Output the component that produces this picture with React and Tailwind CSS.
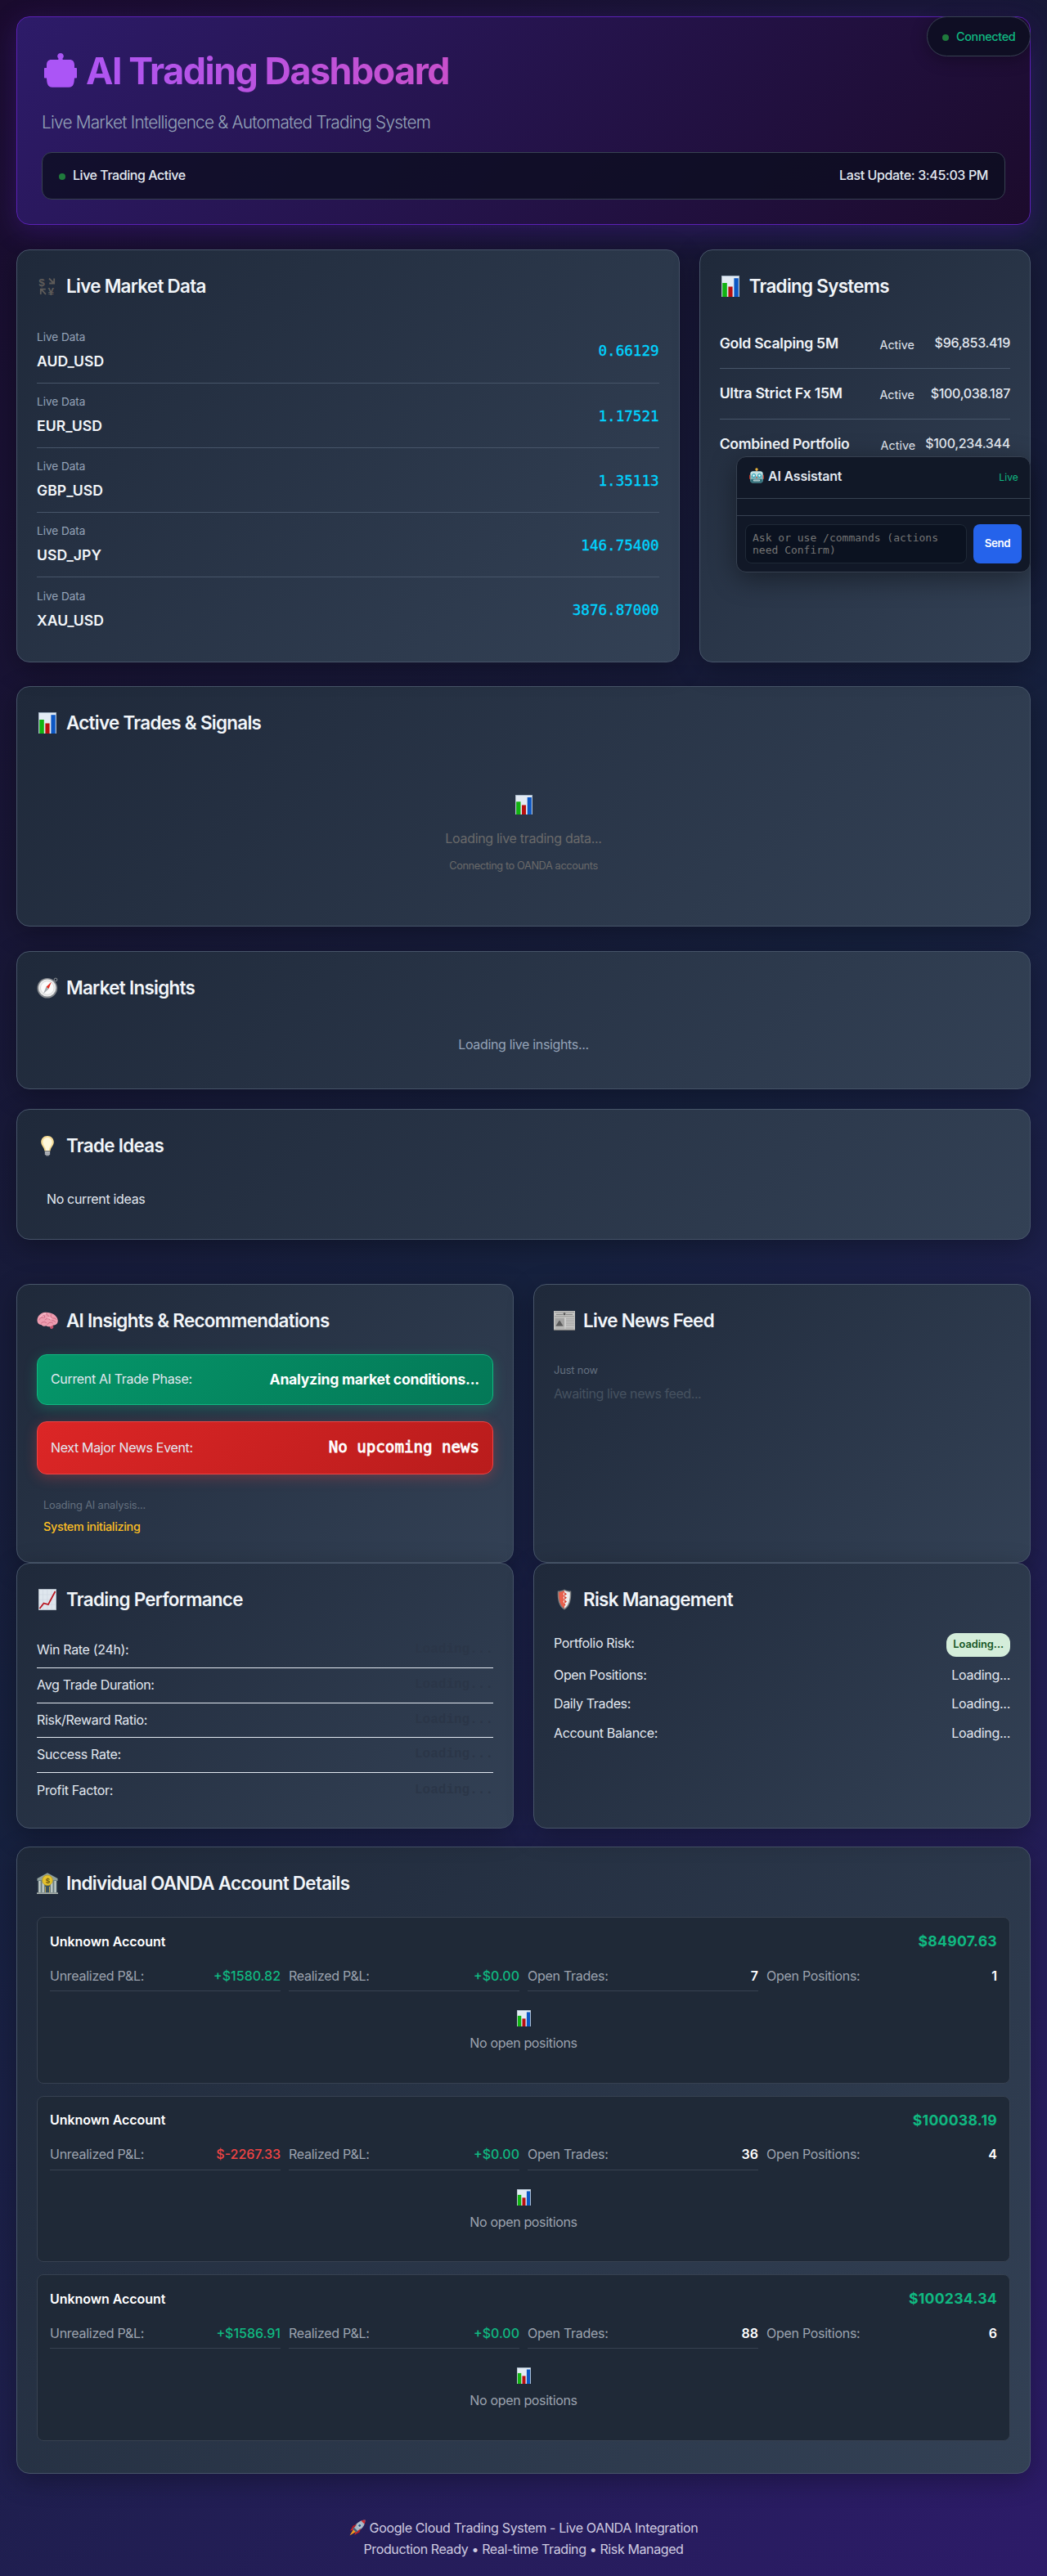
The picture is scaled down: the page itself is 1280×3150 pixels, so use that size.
import React from "react";

/* ---------- icons ---------- */

const BarChart = ({ className }) => (
  <svg viewBox="0 0 22 26" preserveAspectRatio="none" className={className}>
    <rect width="22" height="26" fill="#9fb0c0" />
    <rect x="0.8" y="1" width="20.4" height="25" fill="#e3ebf4" />
    <rect x="1.2" y="9" width="5.6" height="17" fill="#12b312" />
    <rect x="8.4" y="13.5" width="5.2" height="12.5" fill="#b80f0f" />
    <rect x="15.4" y="3.2" width="5.4" height="22.8" fill="#0c57c4" />
  </svg>
);

const Currency = () => (
  <svg viewBox="0 0 26 26" className="h-[26px] w-[26px]" fill="none" stroke="#5f5c59" strokeWidth="1.8">
    <text x="2.2" y="13" fontSize="13.5" fill="#5f5c59" stroke="none" fontFamily="Liberation Sans, sans-serif">$</text>
    <text x="13.6" y="24.3" fontSize="13.5" fill="#5f5c59" stroke="none" fontFamily="Liberation Sans, sans-serif">¥</text>
    <path d="M15 3.5l6 6M21.2 3.5v6h-6" />
    <path d="M11 22.8l-5.5-5.8M4.8 23v-6.4h6" />
  </svg>
);

const Compass = () => (
  <svg viewBox="0 0 26 26" className="h-[26px] w-[26px]">
    <circle cx="23" cy="3" r="1.9" fill="none" stroke="#8b8f94" strokeWidth="1" />
    <circle cx="12.8" cy="13.2" r="12.3" fill="#84888d" />
    <circle cx="12.8" cy="13" r="10.6" fill="#ececec" />
    <circle cx="12.8" cy="13" r="8.3" fill="#fbfbfb" stroke="#cfcfcf" strokeWidth="0.7" />
    <path d="M17.8 5.8L14.6 14l-3.3-2z" fill="#e02d20" />
    <path d="M8 20.2l3.3-8.2 3.3 2z" fill="#a3a7ab" />
  </svg>
);

const Bulb = () => (
  <svg viewBox="0 0 26 26" className="h-[26px] w-[26px]">
    <path d="M13 1C8.4 1 5.2 4.4 5.2 8.6c0 4.6 4 6.6 4.3 11h7c.3-4.4 4.3-6.4 4.3-11C20.8 4.400 17.600 1 13 1z" fill="#f6dc96" />
    <path d="M13 3c-3.300 0-5.600 2.500-5.600 5.500 0 4 3.400 6 3.800 10.500h3.600c.4-4.500 3.800-6.500 3.800-10.500C18.600 5.500 16.300 3 13 3z" fill="#fff8dc" />
    <path d="M9.800 19.500h6.400v4l-1.800 2h-2.800l-1.800-2z" fill="#8f949b" />
    <path d="M10 21.300h6M10 23.200h6" stroke="#d7dadd" strokeWidth="0.7" />
  </svg>
);

const Brain = () => (
  <svg viewBox="0 0 26 26" className="h-[26px] w-[26px]">
    <path d="M16 18l4-.8.3 4.200-1.800 1.800-2.300-1z" fill="#c2536d" />
    <path d="M.5 13C.2 8 4.500 3.200 10 2.800c7-.6 15 3.200 15.700 9.600.4 4.200-2.600 6.200-6.300 6-2.300 2.600-6 2.200-7.800.8-2.300.9-4.800.5-6-1.300C2.800 18.200.7 16.300.5 13z" fill="#ee9db0" />
    <path d="M3 12c1-3 3-3.500 5-2.500M7 5.500c2 0 3 1.500 2.500 3.500M12 3.500c-.5 2 .5 3.500 2.500 3.700M10 12c2-2 4.500-2 6 0M18 5c-1.500 1.500-1 3.500.8 4.500M20 10c1.500-.5 3 .3 3.800 1.500M5.500 16c2-2 4-2 6-.5M13 17.500c1.500-2.500 4-3 6.500-1.500M18.500 13c1.500-.5 3 0 4 1.500" fill="none" stroke="#c9637f" strokeWidth="0.9" strokeLinecap="round" />
    <path d="M4 8.500c1.500-2.500 4-4 7-4M13.500 10c1.500-.5 2.500-.5 4 .3" fill="none" stroke="#ffd1da" strokeWidth="0.9" strokeLinecap="round" />
  </svg>
);

const Newspaper = () => (
  <svg viewBox="0 0 26 24" className="h-[24px] w-[26px]">
    <rect width="26" height="24" fill="#c4c4c2" />
    <rect y="22.800" width="26" height="1.200" fill="#777" />
    <path d="M1 1.500h24M1 6.800h24" stroke="#8b8b8a" strokeWidth="0.8" />
    <path d="M3 4.300h8M15 4.300h8" stroke="#8a8a8a" strokeWidth="1.300" />
    <circle cx="13" cy="3.800" r="1.500" fill="#555" />
    <rect x="1.500" y="8.800" width="11.500" height="10.500" fill="#a5a5a4" />
    <path d="M2.500 18.500l3-5 1.500-2 1.500 2 3 5z" fill="#5b5b5b" />
    <path d="M15 9.700h10M15 11.700h10M15 13.700h10M15 15.700h10M15 17.700h10M2 21h22" stroke="#a0a09f" strokeWidth="0.8" />
    <path d="M14 8v14" stroke="#e4e4e4" strokeWidth="0.6" />
  </svg>
);

const Trend = () => (
  <svg viewBox="0 0 22 26" className="h-[26px] w-[22px]">
    <rect width="22" height="26" fill="#a9b4be" />
    <rect x="0.800" y="0.800" width="20.400" height="24.400" fill="#dfe7ee" />
    <path d="M5.500 1v24M10.800 1v24M16.200 1v24M1 7h20M1 13h20M1 19h20" stroke="#c8d3dc" strokeWidth="0.500" />
    <path d="M1.500 24L6.500 17.500l5.500 1.500L20.500 3" fill="none" stroke="#b9151f" strokeWidth="1.700" />
  </svg>
);

const Shield = () => (
  <svg viewBox="0 0 18 26" className="h-[26px] w-[18px]">
    <path d="M9 .5C6.500 2 3.500 2.500.8 2.500.3 13 2 21.500 9 25.500 16 21.500 17.700 13 17.200 2.500 14.500 2.500 11.500 2 9 .5z" fill="#7d7f80" />
    <path d="M9 2C6.800 3.200 4.500 3.800 2.200 3.900 2 13 3.500 20 9 23.800z" fill="#e8604c" />
    <path d="M9 2c2.200 1.200 4.500 1.800 6.800 1.900C16 13 14.500 20 9 23.800z" fill="#eceded" />
    <path d="M9 4l3 2.200-3 2.300 3 2.300-3 2.300 3 2.300L9 17.700l1.500 1.500L9 21z" fill="#d9422f" />
    <path d="M9 4L7.500 6.200 9 8.500 7.500 10.800 9 13.100 7.500 15.400 9 17.700z" fill="#f2efee" />
  </svg>
);

const Bank = () => (
  <svg viewBox="0 0 26 26" className="h-[26px] w-[26px]">
    <path d="M13 .3L25.500 7v3H.500V7z" fill="#8fa09c" />
    <rect x="1.500" y="9" width="23" height="15.500" fill="#6c8084" />
    <path d="M3.500 10v14M7.700 10v14M18.300 10v14M22.500 10v14" stroke="#c9d2cd" strokeWidth="2" />
    <rect x="10" y="15" width="6" height="9.500" fill="#3b5260" />
    <path d="M10.500 17v7.500M15.500 17v7.500" stroke="#c8a94c" strokeWidth="0.900" />
    <rect x="0" y="24.300" width="26" height="1.700" fill="#aab3ae" />
    <circle cx="13" cy="9.300" r="6.300" fill="#e5c32e" stroke="#b39413" strokeWidth="0.700" />
    <text x="13" y="12.700" textAnchor="middle" fontSize="9.500" fontWeight="700" fill="#6c5a10" fontFamily="Liberation Sans, sans-serif">$</text>
  </svg>
);

const Robot = () => (
  <svg viewBox="0 0 18 19" className="h-[19px] w-[18px]">
    <path d="M9 3v3" stroke="#c5503f" strokeWidth="1.800" />
    <circle cx="9" cy="1.900" r="1.700" fill="#e7b33b" />
    <rect x="0" y="8.500" width="2.500" height="5.500" rx="1" fill="#c0392b" />
    <rect x="15.500" y="8.500" width="2.500" height="5.500" rx="1" fill="#c0392b" />
    <rect x="1.300" y="4.200" width="15.400" height="14.300" rx="3.200" fill="#7fb8bf" />
    <rect x="1.600" y="4.400" width="14.800" height="6" rx="2.800" fill="#c3e0e2" />
    <rect x="1.600" y="13.800" width="14.800" height="4.600" rx="2" fill="#35717c" />
    <circle cx="5.500" cy="9.600" r="2.500" fill="#2fa4b8" />
    <circle cx="12.500" cy="9.600" r="2.500" fill="#2fa4b8" />
    <circle cx="5.500" cy="9.600" r="1.300" fill="#eefcff" />
    <circle cx="12.500" cy="9.600" r="1.300" fill="#eefcff" />
    <path d="M9 10.500l1.200 2H7.800z" fill="#d2402f" />
    <rect x="5" y="14.500" width="8" height="2" rx="0.800" fill="#d5e7e8" />
    <path d="M7 14.500v2M9 14.500v2M11 14.500v2" stroke="#35717c" strokeWidth="0.600" />
  </svg>
);

const Rocket = () => (
  <svg viewBox="0 0 20 20" className="h-5 w-5">
    <path d="M5 12l-4.500 7.500L8 15z" fill="#f39a1d" />
    <path d="M4.500 9L1 13.500l4.500-.8zM11 15.500L6.500 19l.8-4.500z" fill="#c9252b" />
    <path d="M19.500.5C13 .5 8 4.500 4.500 11.500l4 4C15.500 12 19.500 7 19.500.5z" fill="#a7b6c4" />
    <path d="M19.500.5c-1.800 0-3.500.3-5 .9l4.100 4.100c.6-1.500.9-3.200.9-5z" fill="#cf2a2e" />
    <path d="M4.500 11.500l4 4 2-1.200-4.800-4.800z" fill="#3f5b78" />
    <circle cx="12.700" cy="7.300" r="2" fill="#2b5a88" stroke="#e6edf3" strokeWidth="0.700" />
    <path d="M9 6L4.500 7.500 2.500 11l4-1.500zM14 11l-1.500 4.500L9 17.500l1.500-4z" fill="#b51f26" />
  </svg>
);

const RobotSilhouette = () => (
  <svg viewBox="0 0 40 42" className="mr-[11px] ml-[3px] h-[42px] w-10 shrink-0 -translate-y-px">
    <path
      fill="#ab55f6"
      d="M20 0c2.200 0 3.800 1.700 3.800 3.800 0 1.400-.9 2.400-1.400 2.900.1 1 .3 1.200 1.500 1.200h7.100c4.200 0 6 2.600 6 6.600v3.600h2.200c.5 0 .8.3.8.8v10.800c0 .5-.3.800-.8.800H37c-.2 3-.4 5.500-1.200 7.500-1 2.600-2.800 3.700-5.800 3.700H10c-3 0-4.800-1.100-5.800-3.700C3.400 36 3.200 33.500 3 30.500H.8c-.5 0-.8-.3-.8-.8V18.900c0-.5.3-.8.8-.8H3v-3.600c0-4 1.800-6.600 6-6.600h7.100c1.200 0 1.400-.2 1.500-1.200-.5-.5-1.400-1.500-1.400-2.900C16.200 1.700 17.800 0 20 0z"
    />
  </svg>
);

/* ---------- shared pieces ---------- */

function Card({ className = "", icon, title, children }) {
  return (
    <section
      className={`rounded-2xl border border-[#475569] bg-[linear-gradient(135deg,#1f293a_0%,#334155_100%)] p-6 shadow-[0_8px_32px_rgba(0,0,0,0.3)] ${className}`}
    >
      <h2 className="mb-[19px] flex h-[41px] items-center gap-2.5 text-[22.4px] font-semibold tracking-[-0.031em] text-[#f1f5f9]">
        <span className="flex w-[26px] shrink-0 -translate-y-[1px] justify-center">{icon}</span>
        <span className="-translate-y-[0.6px]">{title}</span>
      </h2>
      {children}
    </section>
  );
}

const TitleChart = () => <BarChart className="h-[26px] w-[22px]" />;

const quotes = [
  ["AUD_USD", "0.66129"],
  ["EUR_USD", "1.17521"],
  ["GBP_USD", "1.35113"],
  ["USD_JPY", "146.75400"],
  ["XAU_USD", "3876.87000"],
];

const systems = [
  ["Gold Scalping 5M", "$96,853.419"],
  ["Ultra Strict Fx 15M", "$100,038.187"],
  ["Combined Portfolio", "$100,234.344"],
];

const metrics = ["Win Rate (24h):", "Avg Trade Duration:", "Risk/Reward Ratio:", "Success Rate:", "Profit Factor:"];

const risks = ["Open Positions:", "Daily Trades:", "Account Balance:"];

const accounts = [
  { balance: "$84907.63", pl: "+$1580.82", up: true, trades: "7", positions: "1" },
  { balance: "$100038.19", pl: "$-2267.33", up: false, trades: "36", positions: "4" },
  { balance: "$100234.34", pl: "+$1586.91", up: true, trades: "88", positions: "6" },
];

function Stat({ label, value, valueClass, last }) {
  return (
    <div className={`flex h-[37px] items-center justify-between pt-[1.500px] ${last ? "pb-px" : "border-b border-[#374151]"}`}>
      <span className="tracking-[-0.0175em] text-[#9ca3af]">{label}</span>
      <span className={`tracking-normal ${valueClass}`}>{value}</span>
    </div>
  );
}

function Account({ account }) {
  return (
    <div className="h-[203.5px] rounded-lg border border-[#374151] bg-[#1f2937] p-[15px]">
      <div className="mb-[10px] flex h-7 items-center justify-between pt-px">
        <span className="font-semibold tracking-[-0.004em] text-white">Unknown Account</span>
        <span className="text-[17.6px] font-bold tracking-[0.016em] text-[#10b981]">{account.balance}</span>
      </div>
      <div className="grid grid-cols-4 gap-2.5">
        <Stat label="Unrealized P&L:" value={account.pl} valueClass={account.up ? "font-medium text-[#10b981]" : "font-medium text-[#ef4444]"} />
        <Stat label="Realized P&L:" value="+$0.00" valueClass="font-medium text-[#10b981]" />
        <Stat label="Open Trades:" value={account.trades} valueClass="font-semibold text-white" />
        <Stat label="Open Positions:" value={account.positions} valueClass="font-semibold text-white" last />
      </div>
      <div className="flex flex-col items-center pt-[23px]">
        <BarChart className="h-5 w-[17px]" />
        <p className="mt-2 leading-[25.6px] text-[#9ca3af]">No open positions</p>
      </div>
    </div>
  );
}

/* ---------- page ---------- */

export default function App() {
  return (
    <div className="relative h-[3150px] overflow-hidden bg-[linear-gradient(135deg,#1a0b2e_0%,#16213e_50%,#2d1b69_100%)] px-5 pt-5 font-['Inter',sans-serif] text-base leading-[1.6] tracking-[-0.0215em] text-[#e2e8f0]">
      <header className="h-[255px] rounded-2xl border border-[#5b21b6] bg-[linear-gradient(135deg,#2d1b69_0%,#1c0b2c_100%)] p-[30px] shadow-[0_8px_32px_rgba(91,33,182,0.3)]">
        <h1 className="flex h-[72px] items-center text-[44.8px] font-bold tracking-[-0.033em]">
          <RobotSilhouette />
          <span className="bg-[linear-gradient(90deg,#ae55f2_0%,#c850cc_100%)] bg-clip-text leading-[72px] text-transparent">
            AI Trading Dashboard
          </span>
        </h1>
        <p className="mt-[10px] text-[20.8px] leading-[33px] font-light tracking-[-0.0375em] text-[#94a3b8]">
          Live Market Intelligence &amp; Automated Trading System
        </p>
        <div className="mt-5 flex h-[58px] items-center justify-between rounded-xl border border-[#374151] bg-[#0c0e20]/80 px-5 font-medium">
          <div className="flex items-center gap-[9px] tracking-[-0.0285em]">
            <span className="mt-[2px] h-2 w-2 rounded-full bg-[#1f7a3c]" />
            <span>Live Trading Active</span>
          </div>
          <span className="tracking-[-0.0234em]">Last Update: 3:45:03 PM</span>
        </div>
      </header>

      <div className="absolute top-5 right-5 flex h-[49px] w-[127px] items-center gap-[9px] rounded-[25px] border border-[#374151] bg-[#0f0f23]/95 pl-[18px] text-[14.4px] font-medium tracking-[-0.0235em] text-[#10b981] shadow-[0_4px_20px_rgba(0,0,0,0.3)]">
        <span className="mt-[2px] h-2 w-2 rounded-full bg-[#1f7a3c]" />
        <span>Connected</span>
      </div>

      <div className="mt-[30px] grid h-[504px] grid-cols-[2fr_1fr] gap-6">
        <Card icon={<Currency />} title="Live Market Data">
          {quotes.map(([pair, price], i) => (
            <div
              key={pair}
              className={`flex h-[79.100px] items-center justify-between ${i < quotes.length - 1 ? "border-b border-[#475569]" : ""}`}
            >
              <div>
                <p className="text-[13.6px] leading-[21.8px] tracking-[-0.002em] text-[#94a3b8]">Live Data</p>
                <p className="mt-1 text-[17.6px] leading-[28.2px] font-semibold tracking-[0.002em] text-[#f1f5f9]">{pair}</p>
              </div>
              <span className="pt-px font-['DejaVu_Sans_Mono',monospace] text-[17.6px] tracking-normal text-[#00d4ff] [-webkit-text-stroke:0.35px_#00d4ff]">
                {price}
              </span>
            </div>
          ))}
        </Card>
        <Card icon={<TitleChart />} title="Trading Systems">
          {systems.map(([name, value], i) => (
            <div
              key={name}
              className={`flex h-[61.300px] items-center justify-between ${i < systems.length - 1 ? "border-b border-[#475569]" : ""}`}
            >
              <span className="text-[17.6px] font-semibold tracking-[-0.0155em] text-[#f1f5f9]">{name}</span>
              <span className="pt-0.5 pl-[26px] text-[14.4px] tracking-normal">Active</span>
              <span className="font-medium tracking-[-0.019em]">{value}</span>
            </div>
          ))}
        </Card>
      </div>

      <aside className="absolute top-[558px] right-5 flex h-[142px] w-[360px] flex-col rounded-xl border border-[#374151] bg-[#111827] shadow-[0_8px_32px_rgba(0,0,0,0.4)]">
        <div className="flex h-[51px] items-center justify-between border-b border-[#374151] pr-[14px] pb-[2px] pl-[15px]">
          <div className="flex items-center gap-[5px] font-semibold tracking-[-0.012em]">
            <span className="-mt-[3px]"><Robot /></span>
            AI Assistant
          </div>
          <span className="pt-[2px] text-xs tracking-[0.01em] text-[#10b981]">Live</span>
        </div>
        <div className="h-[21px] border-b border-[#374151]" />
        <div className="flex gap-2 px-2.5 pt-2.5">
          <div className="h-12 w-[271px] rounded-lg border border-[#1f2937] bg-[#0b1220] px-2 pt-2 font-['DejaVu_Sans_Mono',monospace] text-[13px] leading-[15px] tracking-normal text-[#757575]">
            Ask or use /commands (actions
            <br />
            need Confirm)
          </div>
          <button className="h-12 w-[59px] rounded-lg bg-[#2563eb] text-[13.3px] font-semibold tracking-[-0.025em] text-white">
            Send
          </button>
        </div>
      </aside>

      <Card className="mt-[30px] h-[294px]" icon={<TitleChart />} title="Active Trades & Signals">
        <div className="flex flex-col items-center pt-[48px] text-[#6a6a6a]">
          <BarChart className="h-6 w-[21px]" />
          <p className="mt-[17px] leading-[25.6px] tracking-[-0.0195em]">Loading live trading data...</p>
          <p className="mt-[10px] text-[12.8px] leading-[20.5px] tracking-[-0.032em]">Connecting to OANDA accounts</p>
        </div>
      </Card>

      <Card className="mt-[30px] h-[169px]" icon={<Compass />} title="Market Insights">
        <p className="pt-[17px] text-center text-[#94a3b8]">Loading live insights...</p>
      </Card>

      <Card className="mt-6 h-40" icon={<Bulb />} title="Trade Ideas">
        <p className="pt-[13px] pl-3">No current ideas</p>
      </Card>

      <div className="mt-[54px] grid h-[341px] grid-cols-2 gap-6">
        <Card icon={<Brain />} title="AI Insights & Recommendations">
          <div className="mt-5 flex h-[62px] items-center justify-between rounded-xl border border-[#10b981] bg-[linear-gradient(135deg,#059669_0%,#047857_100%)] px-4 shadow-[0_4px_16px_rgba(16,185,129,0.3)]">
            <span>Current AI Trade Phase:</span>
            <span className="text-[17.6px] font-bold tracking-[-0.0141em] text-white">Analyzing market conditions...</span>
          </div>
          <div className="mt-5 flex h-[65px] items-center justify-between rounded-xl border border-[#ef4444] bg-[linear-gradient(135deg,#dc2626_0%,#b91c1c_100%)] px-4 shadow-[0_4px_16px_rgba(239,68,68,0.3)]">
            <span>Next Major News Event:</span>
            <span className="font-['DejaVu_Sans_Mono',monospace] text-[19.2px] tracking-[-0.002em] text-white [-webkit-text-stroke:0.8px_white]">
              No upcoming news
            </span>
          </div>
          <div className="pt-[28px] pl-2">
            <p className="text-[12.8px] leading-[20.5px] tracking-[-0.01em] text-[#64707f]">Loading AI analysis...</p>
            <p className="mt-[3px] text-[14.4px] leading-[23px] font-medium tracking-[-0.021em] text-[#fbbf24]">System initializing</p>
          </div>
        </Card>
        <Card icon={<Newspaper />} title="Live News Feed">
          <div className="pt-[11px]">
            <p className="text-[12.8px] leading-[20.5px] tracking-[-0.009em] text-[#64707f]">Just now</p>
            <p className="mt-[5px] leading-[25.6px] tracking-[-0.0265em] text-[#465260]">Awaiting live news feed...</p>
          </div>
        </Card>
      </div>

      <div className="grid h-[322.500px] grid-cols-2 gap-6">
        <Card icon={<Trend />} title="Trading Performance">
          <div className="pt-px">
            {metrics.map((m, i) => (
              <div key={m} className={`flex h-[42.800px] items-center justify-between ${i < metrics.length - 1 ? "border-b border-[#e2e8f0]" : ""}`}>
                <span className="tracking-[-0.0205em]">{m}</span>
                <span className="font-['Liberation_Mono',monospace] font-bold tracking-normal text-[#2b3648]">Loading...</span>
              </div>
            ))}
          </div>
        </Card>
        <Card icon={<Shield />} title="Risk Management">
          <div className="mb-[10px] flex h-[30px] items-start justify-between pt-px">
            <span>Portfolio Risk:</span>
            <span className="flex h-[29px] items-center rounded-xl bg-[#d4edda] px-2 text-[12.8px] font-semibold tracking-[-0.002em] text-[#155724]">
              Loading...
            </span>
          </div>
          {risks.map((r) => (
            <div key={r} className="mb-[9.800px] flex justify-between leading-[25.6px]">
              <span>{r}</span>
              <span className="tracking-[-0.018em]">Loading...</span>
            </div>
          ))}
        </Card>
      </div>

      <Card className="mt-[24.500px] h-[766.500px]" icon={<Bank />} title="Individual OANDA Account Details">
        <div className="flex flex-col gap-[15px] pt-px">
          {accounts.map((a) => (
            <Account key={a.balance} account={a} />
          ))}
        </div>
      </Card>

      <footer className="mt-[53px] flex flex-col items-center leading-[26px] text-[#cfcbe0]">
        <p className="flex items-center gap-[5px]">
          <Rocket />
          Google Cloud Trading System - Live OANDA Integration
        </p>
        <p className="tracking-[-0.0243em]">Production Ready • Real-time Trading • Risk Managed</p>
      </footer>
    </div>
  );
}
